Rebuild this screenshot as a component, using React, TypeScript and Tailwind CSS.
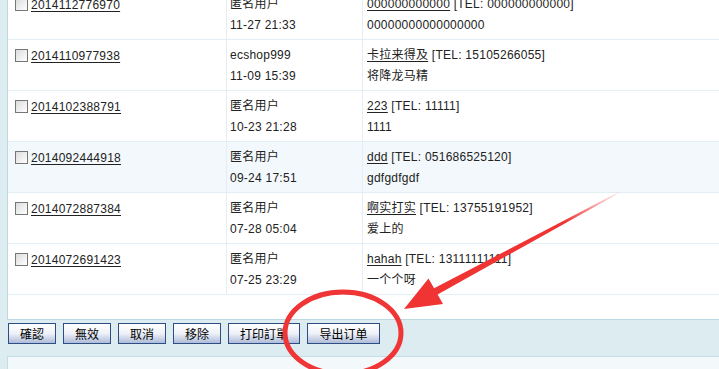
import React from 'react';

type Order = {
  sn: string;
  user: string;
  time: string;
  consignee: string;
  tel: string;
  address: string;
  hl?: boolean;
};

const orders: Order[] = [
  { sn: '2014112776970', user: '匿名用户', time: '11-27 21:33', consignee: '000000000000', tel: '000000000000', address: '00000000000000000' },
  { sn: '2014110977938', user: 'ecshop999', time: '11-09 15:39', consignee: '卡拉来得及', tel: '15105266055', address: '将降龙马精' },
  { sn: '2014102388791', user: '匿名用户', time: '10-23 21:28', consignee: '223', tel: '11111', address: '1111' },
  { sn: '2014092444918', user: '匿名用户', time: '09-24 17:51', consignee: 'ddd', tel: '051686525120', address: 'gdfgdfgdf', hl: true },
  { sn: '2014072887384', user: '匿名用户', time: '07-28 05:04', consignee: '啊实打实', tel: '13755191952', address: '爱上的' },
  { sn: '2014072691423', user: '匿名用户', time: '07-25 23:29', consignee: 'hahah', tel: '13111111111', address: '一个个呀' },
];

const buttons = [
  { label: '確認', w: 'w-[48px]' },
  { label: '無效', w: 'w-[48px]' },
  { label: '取消', w: 'w-[48px]' },
  { label: '移除', w: 'w-[48px]' },
  { label: '打印訂單', w: 'w-[72px]' },
  { label: '导出订单', w: 'w-[73px]' },
];

function Checkbox() {
  return (
    <span className="inline-block w-[13px] h-[13px] border border-[#767676] bg-gradient-to-br from-[#dcdcdc] to-white mr-[3px] align-[-2px]" />
  );
}

function OrderRow({ o }: { o: Order }) {
  return (
    <div className={`grid grid-cols-[219px_136px_1fr] h-[51px] border-b border-[#e2eff4] ${o.hl ? 'bg-[#f2f8fb]' : 'bg-white'}`}>
      <div className="pl-[7px] pt-[5px] border-r border-[#e2eff4]">
        <div className="flex items-center h-[21px]">
          <Checkbox />
          <span className="underline underline-offset-2">{o.sn}</span>
        </div>
      </div>
      <div className="pl-[3px] pt-[5px] border-r border-[#e2eff4]">
        <div className="h-[21px] leading-[21px]">{o.user}</div>
        <div className="h-[21px] leading-[21px]">{o.time}</div>
      </div>
      <div className="pl-[4px] pt-[5px]">
        <div className="h-[21px] leading-[21px] whitespace-nowrap">
          <span className="underline underline-offset-2">{o.consignee}</span> [TEL: {o.tel}]
        </div>
        <div className="h-[21px] leading-[21px]">{o.address}</div>
      </div>
    </div>
  );
}

export default function App() {
  return (
    <div
      className="relative w-[719px] h-[369px] overflow-hidden bg-[#dcecf1] text-[12px] tracking-[0.25px] text-[#222]"
      style={{ fontFamily: '"Liberation Sans", Arial, "Noto Sans CJK SC", sans-serif' }}
    >
      {/* order list */}
      <div className="ml-[7px] -mt-[11px] bg-white border-l border-b border-[#bcd8e3]">
        {orders.map(o => (
          <OrderRow key={o.sn} o={o} />
        ))}
        <div className="h-[24px]" />
      </div>

      {/* action bar */}
      <div className="flex gap-[7px] pl-[8px] pt-[3px] h-[36px]">
        {buttons.map(b => (
          <button
            key={b.label}
            className={`${b.w} h-[21px] border border-[#2c4d86] bg-gradient-to-b from-white via-[#eef1f8] to-[#aebbd8] text-[12px] tracking-normal text-black leading-[19px]`}
            style={{ fontFamily: '"Noto Sans CJK SC", sans-serif' }}
          >
            {b.label}
          </button>
        ))}
      </div>

      {/* pager panel */}
      <div className="ml-[7px] h-[20px] bg-[#f3f8fa] border-t border-l border-[#c3dce6]" />

      {/* annotation */}
      <svg className="absolute inset-0 w-full h-full pointer-events-none" viewBox="0 0 719 369">
        <defs>
          <linearGradient id="fade" gradientUnits="userSpaceOnUse" x1="622" y1="191" x2="565" y2="222">
            <stop offset="0" stopColor="#f03434" stopOpacity="0" />
            <stop offset="1" stopColor="#f03434" stopOpacity="1" />
          </linearGradient>
        </defs>
        <ellipse cx="343" cy="333" rx="58" ry="41" fill="none" stroke="#ef3535" strokeWidth="5" />
        <polygon
          points="404,309 443,304 437.6,294.6 620.3,192.4 619.7,191.6 434.1,288.2 428.5,278.5"
          fill="url(#fade)"
        />
      </svg>
    </div>
  );
}
